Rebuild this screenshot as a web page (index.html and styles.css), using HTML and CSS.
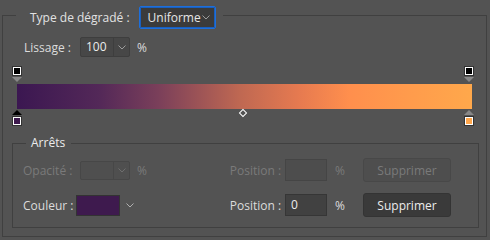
FILE: index.html
```html
<!DOCTYPE html>
<html lang="fr">
<head>
<meta charset="utf-8">
<link rel="stylesheet" href="styles.css">
</head>
<body>
<div class="panel">
  <div class="panel-head">
    <span class="head-label">Type de dégradé :</span>
    <div class="select">
      <span class="select-val">Uniforme</span>
      <svg class="chev" width="8" height="5" viewBox="0 0 8 5"><path d="M0.5 0.5 L4 4 L7.5 0.5" fill="none" stroke="#9c9c9c" stroke-width="1"/></svg>
    </div>
  </div>

  <div class="row lissage">
    <span class="lbl">Lissage :</span>
    <div class="combo">
      <span class="combo-val">100</span>
      <span class="combo-btn"><svg width="8" height="5" viewBox="0 0 8 5"><path d="M0.5 0.5 L4 4 L7.5 0.5" fill="none" stroke="#9c9c9c" stroke-width="1"/></svg></span>
    </div>
    <span class="unit">%</span>
  </div>

  <div class="track">
    <div class="bar"></div>
    <div class="stop top" style="left:0%"><div class="sq" style="background-color:#000"></div><div class="arr-down"></div></div>
    <div class="stop top" style="left:100%"><div class="sq" style="background-color:#000"></div><div class="arr-down"></div></div>
    <div class="stop bottom sel" style="left:0%"><div class="arr-up"></div><div class="sq" style="background-color:#3e1a4e"></div></div>
    <div class="stop bottom" style="left:100%"><div class="arr-up"></div><div class="sq" style="background-color:#ffa64b"></div></div>
    <div class="mid" style="left:50%"></div>
  </div>

  <div class="group">
    <div class="group-head">Arrêts</div>
    <div class="row stops-row r1">
      <span class="lbl dis">Opacité :</span>
      <div class="combo dis-combo">
        <span class="combo-val"></span>
        <span class="combo-btn"><svg width="8" height="5" viewBox="0 0 8 5"><path d="M0.5 0.5 L4 4 L7.5 0.5" fill="none" stroke="#6e6e6e" stroke-width="1"/></svg></span>
      </div>
      <span class="unit dis">%</span>
      <div class="pos">
        <span class="pos-lbl dis">Position :</span>
        <div class="input dis-input"></div>
        <span class="pos-unit dis">%</span>
        <button class="btn dis-btn">Supprimer</button>
      </div>
    </div>
    <div class="row stops-row r2">
      <span class="lbl lbl-c">Couleur :</span>
      <div class="swatch"></div>
      <svg class="swatch-chev" width="8" height="5" viewBox="0 0 8 5"><path d="M0.5 0.5 L4 4 L7.5 0.5" fill="none" stroke="#b0b0b0" stroke-width="1"/></svg>
      <div class="pos">
        <span class="pos-lbl">Position :</span>
        <div class="input">0</div>
        <span class="pos-unit">%</span>
        <button class="btn">Supprimer</button>
      </div>
    </div>
  </div>
</div>
</body>
</html>
```

FILE: styles.css
```css
* { box-sizing: border-box; }
html, body { margin: 0; padding: 0; }
body {
  background: #535353;
  width: 490px;
  height: 240px;
  overflow: hidden;
  font-family: "Open Sans", "Noto Sans", sans-serif;
  font-size: 12px;
  color: #dcdcdc;
}
.panel {
  margin: 15px 3px 0 2px;
  height: 222px;
  border: 1px solid #404040;
}
.panel-head {
  margin: -10px 0 0 13px;
  width: max-content;
  height: 23px;
  padding: 0 7px 0 14px;
  background: #535353;
  display: flex;
  align-items: center;
}
.head-label { color: #e2e2e2; }
.select {
  margin-left: 9px;
  width: 77px;
  height: 23px;
  background: #3b3b3b;
  border: 1px solid #1d6fdc;
  box-shadow: inset 0 0 0 1px #1a5fbd;
  border-radius: 2px;
  display: flex;
  align-items: center;
  padding: 0 5px 0 8px;
  justify-content: space-between;
  color: #e6e6e6;
}
.row {
  display: flex;
  align-items: center;
}
.lissage {
  margin-top: 8px;
  padding-left: 21px;
  height: 20px;
}
.lbl { width: 56px; }
.combo {
  width: 50px;
  height: 20px;
  background: #474747;
  border: 1px solid #3e3e3e;
  border-radius: 2px;
  display: flex;
}
.combo-val {
  flex: 1;
  padding-left: 5px;
  line-height: 18px;
  color: #ececec;
  border-right: 1px solid #3e3e3e;
}
.combo-btn {
  width: 15px;
  display: flex;
  align-items: center;
  justify-content: center;
}
.unit { margin-left: 7px; }

.track {
  position: relative;
  margin: 9px 0 0 14px;
  width: 452px;
  padding: 18px 0 17px;
}
.bar {
  width: 455px;
  height: 25px;
  background: linear-gradient(to right, #3b1751 0%, #532858 18%, #7a3f5a 31%, #bf6852 49%, #e67a50 62%, #ff8f4d 73%, #ffa84b 100%);
}
.stop {
  position: absolute;
  width: 10px;
  transform: translateX(-50%);
  display: flex;
  flex-direction: column;
  align-items: center;
}
.stop.top { top: 0; }
.stop.bottom { top: 44px; }
.sq {
  width: 10px;
  height: 10px;
  border: 1px solid #333;
  box-shadow: inset 0 0 0 1px #fff;
}
.arr-down {
  margin-top: 1px;
  width: 0; height: 0;
  border-left: 5px solid transparent;
  border-right: 5px solid transparent;
  border-top: 5px solid #878787;
}
.arr-up {
  width: 0; height: 0;
  border-left: 5px solid transparent;
  border-right: 5px solid transparent;
  border-bottom: 5px solid #878787;
  margin-bottom: 1px;
}
.stop.sel .arr-up { border-bottom-color: #000; }
.mid {
  position: absolute;
  top: 44px;
  width: 6px;
  height: 6px;
  margin-left: -3px;
  border: 1px solid #fff;
  transform: rotate(45deg);
}

.group {
  margin: 17px 7px 0 9px;
  height: 85px;
  border: 1px solid #404040;
}
.group-head {
  margin: -9px 0 0 13px;
  width: max-content;
  height: 16px;
  line-height: 16px;
  padding: 0 6px 0 5px;
  background: #535353;
  color: #ececec;
}
.stops-row {
  height: 24px;
  padding: 0 27px 0 10px;
}
.r1 { margin-top: 7px; }
.r2 { margin-top: 11px; }
.r1 .lbl { width: 57px; }
.lbl-c { width: 53px; }
.dis { color: #7a7a7a; }
.dis-combo { background: #4f4f4f; border-color: #474747; height: 19px; }
.dis-combo .combo-val { border-right-color: #474747; }
.swatch {
  width: 44px;
  height: 21px;
  background: #3e1a4e;
  border: 1px solid #333;
}
.swatch-chev { margin-left: 6px; }
.pos {
  margin-left: auto;
  display: flex;
  align-items: center;
}
.input {
  margin-left: 4px;
  width: 42px;
  height: 22px;
  background: #414141;
  border: 1px solid #363636;
  padding-left: 5px;
  line-height: 20px;
  color: #ececec;
}
.dis-input { background: #4d4d4d; border-color: #454545; }
.pos-unit { margin-left: 8px; }
.btn {
  margin-left: 18px;
  width: 88px;
  height: 24px;
  background: #3a3a3a;
  border: 1px solid #343434;
  border-radius: 3px;
  font-family: inherit;
  font-size: 12px;
  color: #ececec;
  padding: 0;
}
.dis-btn {
  background: #4e4e4e;
  border-color: #484848;
  color: #7a7a7a;
}
```
